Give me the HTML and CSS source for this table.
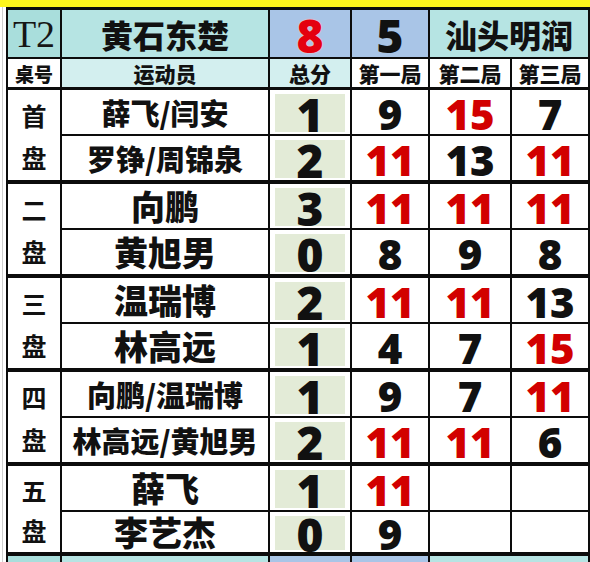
FILE: index.html
```html
<!DOCTYPE html>
<html lang="zh-CN">
<head>
<meta charset="utf-8">
<link rel="stylesheet" href="styles.css">
</head>
<body>
<div class="topband"></div>
<div class="page">
  <div class="board">
    <div class="row head1">
      <div class="c tcode">T2</div>
      <div class="c team">黄石东楚</div>
      <div class="c big red">8</div>
      <div class="c big blue">5</div>
      <div class="c team span2">汕头明润</div>
    </div>
    <div class="row head2">
      <div class="c lab white small">桌号</div>
      <div class="c lab cyan">运动员</div>
      <div class="c lab cyan">总分</div>
      <div class="c lab white">第一局</div>
      <div class="c lab white">第二局</div>
      <div class="c lab white">第三局</div>
    </div>

    <div class="group first">
      <div class="c desk"><span>首</span><span>盘</span></div>
      <div class="c name dbl">薛飞/闫安</div><div class="c tot">1</div><div class="c sc">9</div><div class="c sc r">15</div><div class="c sc">7</div>
      <div class="c name dbl">罗铮/周锦泉</div><div class="c tot">2</div><div class="c sc r">11</div><div class="c sc">13</div><div class="c sc r">11</div>
    </div>

    <div class="group">
      <div class="c desk"><span>二</span><span>盘</span></div>
      <div class="c name">向鹏</div><div class="c tot">3</div><div class="c sc r">11</div><div class="c sc r">11</div><div class="c sc r">11</div>
      <div class="c name">黄旭男</div><div class="c tot">0</div><div class="c sc">8</div><div class="c sc">9</div><div class="c sc">8</div>
    </div>

    <div class="group">
      <div class="c desk"><span>三</span><span>盘</span></div>
      <div class="c name">温瑞博</div><div class="c tot">2</div><div class="c sc r">11</div><div class="c sc r">11</div><div class="c sc">13</div>
      <div class="c name">林高远</div><div class="c tot">1</div><div class="c sc">4</div><div class="c sc">7</div><div class="c sc r">15</div>
    </div>

    <div class="group">
      <div class="c desk"><span>四</span><span>盘</span></div>
      <div class="c name dbl">向鹏/温瑞博</div><div class="c tot">1</div><div class="c sc">9</div><div class="c sc">7</div><div class="c sc r">11</div>
      <div class="c name dbl">林高远/黄旭男</div><div class="c tot">2</div><div class="c sc r">11</div><div class="c sc r">11</div><div class="c sc">6</div>
    </div>

    <div class="group last">
      <div class="c desk"><span>五</span><span>盘</span></div>
      <div class="c name">薛飞</div><div class="c tot">1</div><div class="c sc r">11</div><div class="c sc"></div><div class="c sc"></div>
      <div class="c name">李艺杰</div><div class="c tot">0</div><div class="c sc">9</div><div class="c sc"></div><div class="c sc"></div>
    </div>

    <div class="row head1 next">
      <div class="c tcode"></div>
      <div class="c team"></div>
      <div class="c big blue"></div>
      <div class="c big blue"></div>
      <div class="c team span2"></div>
    </div>
  </div>
</div>
</body>
</html>
```

FILE: styles.css
```css
html, body {
  margin: 0;
  padding: 0;
  background: #ffffff;
  overflow: hidden;
}
body {
  width: 590px;
  height: 562px;
  font-family: "Noto Sans CJK SC", "Noto Sans", sans-serif;
  color: #111;
}
.topband {
  height: 7px;
  background: #fdf51c;
}
.page {
  padding-left: 2px;
}
.board {
  display: flex;
  flex-direction: column;
  border-left: 1px solid #cfcfcf;
  padding-left: 3px;
}
.board > * {
  background: #0c0c0c;
}
.row, .group {
  display: grid;
  grid-template-columns: 52px 206px 80px 76px 80px 76px;
  column-gap: 2px;
  padding: 0 2px;
}
.head1 {
  grid-template-rows: 47px;
  padding-top: 3px;
}
.head2 {
  grid-template-rows: 28px;
  padding-top: 2px;
}
.group {
  grid-template-rows: 44px 44px;
  row-gap: 2px;
  padding-top: 4px;
}
.group.first {
  padding-top: 3px;
}
.group.last {
  grid-template-rows: 44px 40px;
}
.next {
  padding-top: 4px;
}
.c {
  display: flex;
  align-items: center;
  justify-content: center;
  background: #ffffff;
  line-height: 1;
  white-space: nowrap;
}
.tcode {
  background: #a9dedc;
  font-family: "Liberation Serif", serif;
  font-size: 38px;
  color: #161616;
}
.team {
  background: #b6e4e3;
  font-size: 32px;
  font-weight: 900;
}
.span2 {
  grid-column: span 2;
}
.big {
  background: #a9c5e7;
  font-family: "Open Sans", sans-serif;
  font-size: 46px;
  font-weight: 800;
  padding-top: 2px;
}
.big.red {
  color: #e4000f;
  text-shadow: 0 0 2px #ffb3b8, 0 0 1px #fff;
}
.big.blue {
  color: #111;
}
.lab {
  font-size: 21px;
  font-weight: 900;
}
.lab.small {
  font-size: 19px;
}
.cyan {
  background: #d3efef;
}
.white {
  background: #ffffff;
}
.desk {
  grid-row: span 2;
  flex-direction: column;
  justify-content: space-around;
  font-size: 25px;
  font-weight: 700;
  padding: 4px 0 2px;
}
.name {
  font-size: 34px;
  font-weight: 900;
}
.name.dbl {
  font-size: 29px;
}
.tot {
  background: #e3ebd7;
  border: solid #ffffff;
  border-width: 4px 5px 2px 5px;
  font-family: "Open Sans", sans-serif;
  font-weight: 800;
  font-size: 46px;
  line-height: 38px;
  padding-top: 2px;
}
.sc {
  font-family: "Open Sans", sans-serif;
  font-weight: 800;
  font-size: 42px;
  color: #111;
  padding-top: 3px;
}
.sc.r {
  color: #d20000;
}
```
